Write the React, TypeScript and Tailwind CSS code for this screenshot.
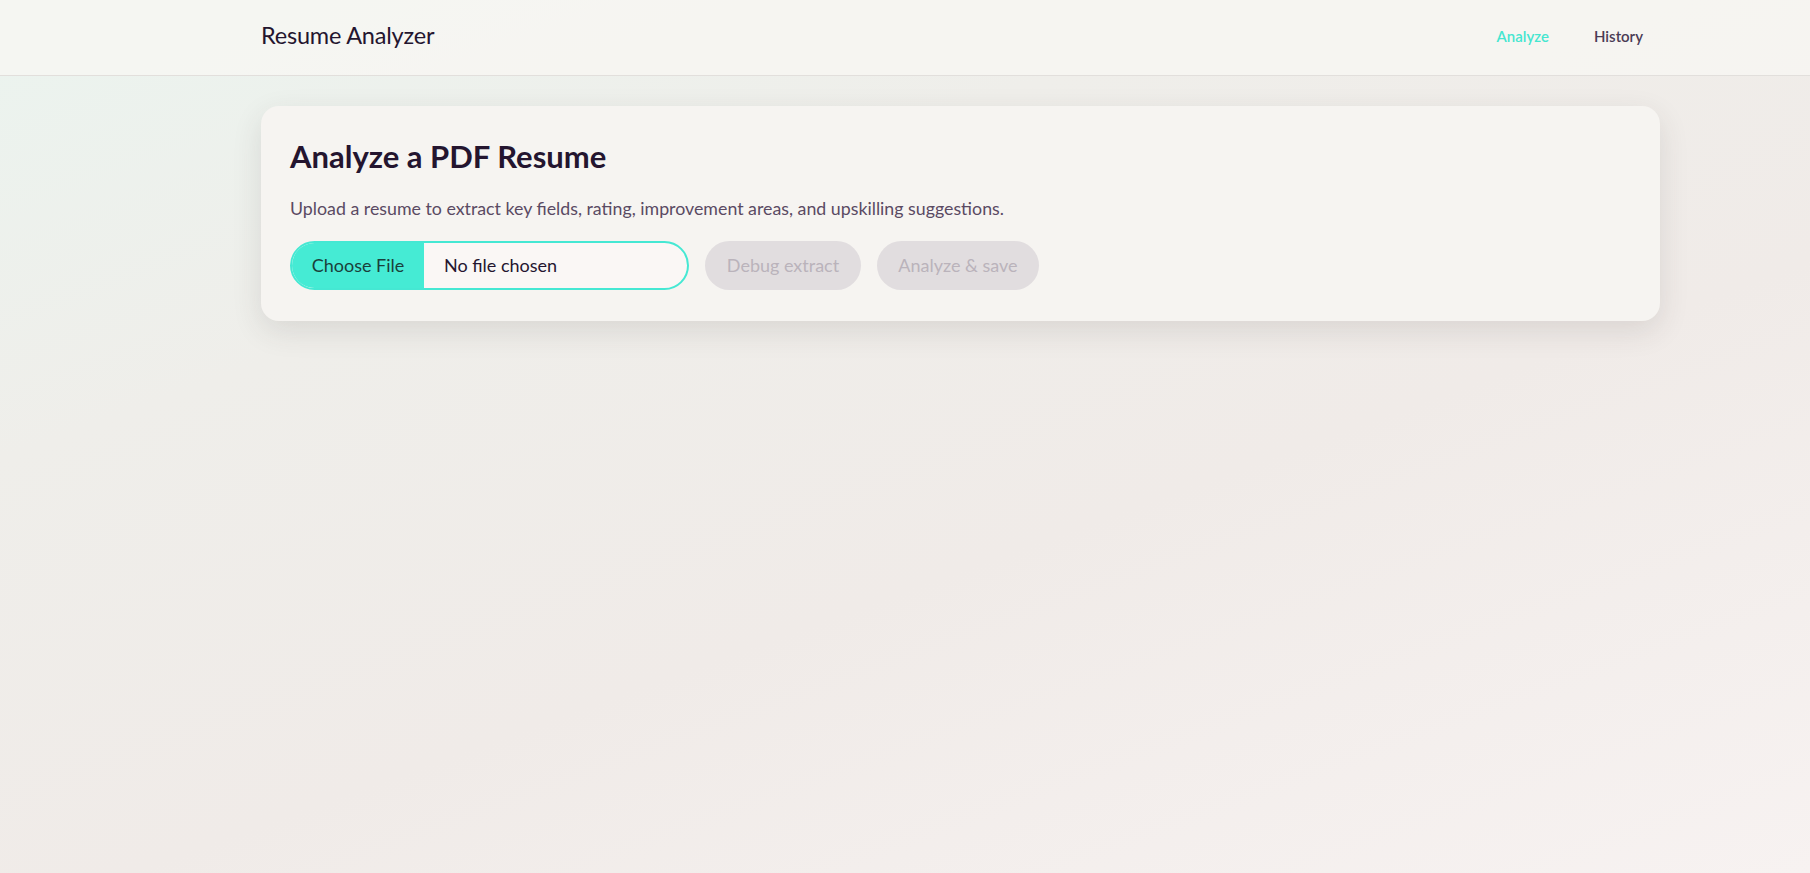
import React from "react";

const FONT = "font-['Lato','Noto_Sans',sans-serif]";

function Header() {
  return (
    <header className="h-[76px] border-b border-[#e2dfdc] bg-[#f7f6f3]/80">
      <div className="ml-[261px] w-[1399px] h-full flex items-center justify-between">
        <div className="mb-[4px] text-[23.5px] text-[#24152f] tracking-[-0.2px]">Resume Analyzer</div>
        <nav className="mb-[3px] flex items-center gap-[45px] pr-[17px] text-[15px] font-semibold">
          <a className="text-[#45e6d0]">Analyze</a>
          <a className="text-[#4a3b55]">History</a>
        </nav>
      </div>
    </header>
  );
}

function UploadCard() {
  return (
    <section className="mt-[30px] ml-[261px] w-[1399px] rounded-[18px] bg-[#f6f4f1] px-[29px] pt-[31px] pb-[31px] shadow-[0_10px_30px_rgba(60,50,50,0.12)]">
      <h1 className="text-[31px] font-bold leading-[38px] text-[#24152f]">Analyze a PDF Resume</h1>
      <p className="mt-[20px] text-[17.8px] leading-[26px] text-[#5a4a63]">
        Upload a resume to extract key fields, rating, improvement areas, and upskilling suggestions.
      </p>
      <div className="mt-[20px] flex items-center gap-[16px]">
        <label className="flex h-[49px] w-[399px] items-stretch overflow-hidden rounded-full border-2 border-[#45e8d3] bg-[#faf7f5] cursor-pointer">
          <input type="file" accept="application/pdf" className="hidden" />
          <span className="flex w-[132px] items-center justify-center bg-[#45ebd4] text-[18px] text-[#1a3f3b]">
            Choose File
          </span>
          <span className="flex items-center pl-[20px] text-[18px] text-[#24152f]">No file chosen</span>
        </label>
        <button disabled className="h-[49px] w-[156px] rounded-full bg-[#e1dddf] text-[18px] text-[#bab3bb]">
          Debug extract
        </button>
        <button disabled className="h-[49px] w-[162px] rounded-full bg-[#e1dddf] text-[18px] text-[#bab3bb]">
          Analyze &amp; save
        </button>
      </div>
    </section>
  );
}

export default function App() {
  return (
    <div className={`${FONT} min-h-screen bg-[linear-gradient(160deg,#ebf4ef_0%,#efeeea_30%,#f0ebe8_60%,#f7f2f1_100%)]`}>
      <Header />
      <UploadCard />
    </div>
  );
}
